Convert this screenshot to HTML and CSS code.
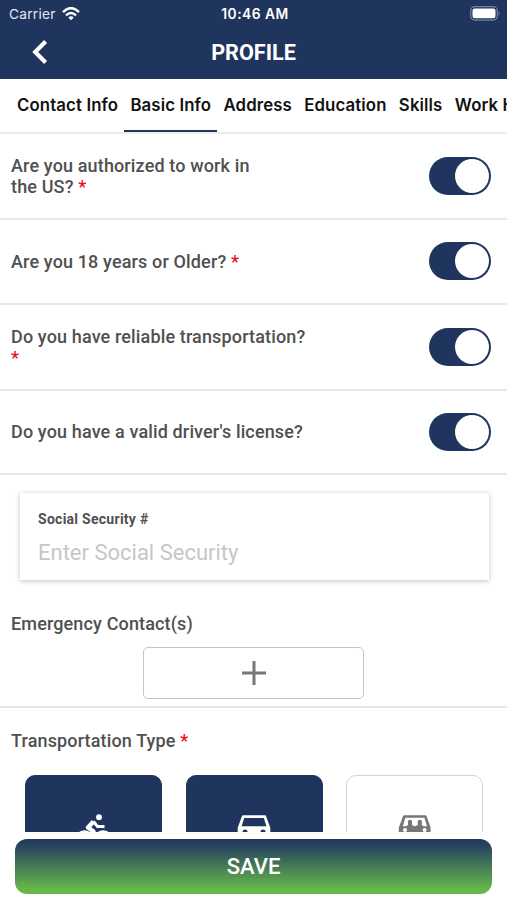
FILE: index.html
```html
<!DOCTYPE html>
<html lang="en">
<head>
<meta charset="utf-8">
<meta name="viewport" content="width=device-width, initial-scale=1">
<title>Profile</title>
<link rel="stylesheet" href="styles.css">
</head>
<body>
<div class="screen">
  <header class="header">
    <div class="status">
      <div class="carrier"><span>Carrier</span>
        <svg width="18" height="14" viewBox="0 0 18 14" fill="none" stroke="#fff" stroke-width="2.5"><path d="M1 5.2Q9-2.6 17 5.2M4 8.3Q9 3.6 14 8.3"/><path d="M9 13.2L6.3 10.4Q9 8 11.7 10.4Z" fill="#fff" stroke="none"/></svg>
      </div>
      <span class="time">10:46 AM</span>
      <svg class="battery" width="31" height="15" viewBox="0 0 31 15"><rect x=".7" y=".7" width="26.6" height="13.4" rx="4" fill="none" stroke="#7683a0" stroke-width="1.2"/><rect x="2.5" y="2.5" width="23" height="9.8" rx="2.2" fill="#fff"/><path d="M28.6 5Q30.8 7.4 28.6 9.8Z" fill="#7683a0"/></svg>
    </div>
    <div class="titlebar">
      <svg class="back" width="16" height="24" viewBox="0 0 16 24" fill="none" stroke="#fff" stroke-width="4.2"><path d="M13.6 1.5L3.2 12L13.6 22.5"/></svg>
      <h1>PROFILE</h1>
    </div>
  </header>
  <nav class="tabs">
    <span class="tab">Contact Info</span>
    <span class="tab active">Basic Info</span>
    <span class="tab">Address</span>
    <span class="tab">Education</span>
    <span class="tab">Skills</span>
    <span class="tab">Work History</span>
  </nav>
  <main class="content">
    <section class="row"><p class="label">Are you authorized to work in<br>the US? <b>*</b></p><span class="toggle"></span></section>
    <section class="row"><p class="label">Are you 18 years or Older? <b>*</b></p><span class="toggle"></span></section>
    <section class="row"><p class="label">Do you have reliable transportation?<br><b>*</b></p><span class="toggle"></span></section>
    <section class="row last"><p class="label">Do you have a valid driver's license?</p><span class="toggle"></span></section>
    <section class="contact">
      <label class="field">
        <span class="field-name">Social Security #</span>
        <span class="placeholder">Enter Social Security</span>
      </label>
      <p class="label">Emergency Contact(s)</p>
      <div class="add"><svg width="24" height="24" viewBox="0 0 24 24" stroke="#777" stroke-width="3"><path d="M0 12H24M12 0V24"/></svg></div>
    </section>
    <section class="transport">
      <p class="label">Transportation Type <b>*</b></p>
      <div class="cards">
        <div class="card selected">
          <svg width="34" height="34" viewBox="0 0 34 34" fill="none" stroke="#fff"><circle cx="22" cy="3.2" r="2.9" fill="#fff" stroke="none"/><path d="M16.5 7.5L11 13.5L16.5 17.5V26" stroke-width="4.4" stroke-linejoin="round"/><path d="M16.5 7.5L20.5 12.6H27.5" stroke-width="3"/><circle cx="7.5" cy="25.2" r="7" stroke-width="4"/><circle cx="26.2" cy="25.2" r="7" stroke-width="4"/></svg>
        </div>
        <div class="card selected">
          <svg width="34" height="34" viewBox="0 0 34 34"><path d="M6.2 2.5H27.8L32 14V28H2V14Z" fill="#fff" stroke="#fff" stroke-width="2.6" stroke-linejoin="round"/><path d="M7.2 4H26.8L29.4 12.2H4.6Z" fill="#1f355e"/><circle cx="8" cy="18" r="2.5" fill="#1f355e"/><circle cx="26" cy="18" r="2.5" fill="#1f355e"/></svg>
        </div>
        <div class="card">
          <svg width="34" height="34" viewBox="0 0 34 34"><path d="M6.2 2.5H27.4L31.4 14V28H2V14Z" fill="#777" stroke="#777" stroke-width="2.4" stroke-linejoin="round"/><path d="M7.4 3.8H26.4L29 12.2H4.8Z" fill="#fff"/><g fill="#777"><circle cx="12" cy="8" r="2.2"/><circle cx="21.8" cy="8" r="2.2"/><path d="M8 13Q8.8 11.4 10 11V8H14V11Q16 11.5 16.9 13Q17.8 11.5 19.8 11V8H23.8V11Q25 11.4 25.8 13Z"/></g><circle cx="7" cy="16" r="2" fill="#fff"/><circle cx="26.6" cy="16" r="2" fill="#fff"/></svg>
        </div>
      </div>
    </section>
  </main>
  <footer class="footer"><div class="save">SAVE</div></footer>
</div>
</body>
</html>
```
FILE: styles.css
```css
* { box-sizing: border-box; }
body { margin: 0; background: #fff; font-family: Roboto, sans-serif; }
.screen { width: 507px; height: 900px; display: flex; flex-direction: column; overflow: hidden; }
.header { height: 79px; flex: none; background: #1f355e; color: #fff; font-family: Inter, sans-serif; }
.status { height: 27px; display: grid; grid-template-columns: 1fr auto 1fr; align-items: center; padding: 0 6px 0 9px; }
.carrier { display: flex; align-items: center; gap: 6px; font-size: 13.7px; letter-spacing: .25px; color: #e2e7f0; }
.time { font-size: 13.8px; font-weight: 600; letter-spacing: .5px; }
.battery { justify-self: end; }
.titlebar { height: 50px; display: grid; grid-template-columns: 1fr auto 1fr; align-items: center; padding: 0 32px; }
h1 { margin: 0; font: 700 21.6px Roboto, sans-serif; }
.tabs { height: 55px; flex: none; display: flex; padding-left: 11px; border-bottom: 2px solid #ececec; font: 600 16.8px Inter, sans-serif; letter-spacing: .12px; color: #111; white-space: nowrap; overflow: hidden; }
.tab { height: 54px; padding: 0 6.3px 0 6px; line-height: 53px; }
.active { border-bottom: 3px solid #1f355e; }
.content { flex: 1; min-height: 0; overflow: hidden; }
.row { height: 85.5px; display: flex; align-items: center; justify-content: space-between; padding: 0 16px 0 11px; border-bottom: 2px solid #e8e8e8; }
.last { height: 84.5px; }
.label { margin: 0; font-size: 18px; line-height: 21px; font-weight: 500; letter-spacing: .14px; color: #505050; }
.label b { color: #f00c16; font-weight: 500; }
.toggle { width: 62px; height: 38px; border-radius: 19px; background: #1f355e; padding: 2px; display: flex; justify-content: flex-end; }
.toggle::after { content: ""; width: 34px; height: 34px; border-radius: 50%; background: #fff; }
.contact { height: 233px; padding: 18px 11px 0; border-bottom: 2px solid #e6e6e6; }
.field { display: flex; flex-direction: column; height: 87px; margin: 0 7px 33px 9px; padding: 17px 18px; background: #fff; box-shadow: 0 1px 5px rgba(0,0,0,.25); }
.field-name { font-size: 14px; line-height: 18px; font-weight: 700; letter-spacing: .27px; color: #505050; }
.placeholder { font-size: 22px; line-height: 28px; margin-top: 11px; color: #c6c6c8; }
.add { width: 221px; height: 52px; margin: 13px auto 0; border: 1.5px solid #c4c4c4; border-radius: 5px; display: flex; align-items: center; justify-content: center; }
.transport { padding: 22px 11px 0; }
.cards { display: grid; grid-template-columns: repeat(3, 137px); gap: 23.5px; margin: 24px 0 0 14px; }
.card { height: 137px; border: 1px solid #d4d4d4; border-radius: 10px; display: flex; justify-content: center; padding-top: 38px; }
.selected { background: #1f355e; border-color: #1f355e; }
.footer { flex: none; height: 68px; padding: 7px 15px 6px; background: #fff; }
.save { height: 55px; border-radius: 12px; background: linear-gradient(#203860, #2b4b5e 18%, #65b64a 90%, #66b948); color: #fff; display: flex; align-items: center; justify-content: center; font-size: 22px; font-weight: 500; }
```
